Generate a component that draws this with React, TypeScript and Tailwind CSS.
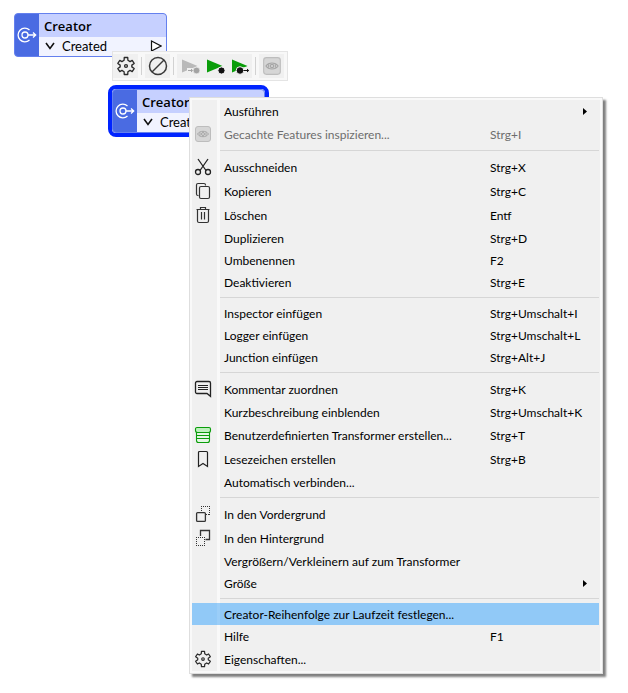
import type { ReactNode } from "react";
import clsx from "clsx";

type IconProps = { className?: string };

function GearIcon({ className = "size-[18px]" }: IconProps) {
  return (
    <svg viewBox="0 0 24 24" className={className} fill="none" stroke="#2a2a2a" strokeWidth="1.6" strokeLinejoin="round">
      <path d="M9.92 1.8H14.08L14.3 5.1 16.91 6.73 19.43 5.31 21.8 8.91 19.01 10.9V13.1L21.8 15.09 19.43 18.69 16.91 17.27 14.3 18.9 14.08 22.2H9.92L9.7 18.9 7.09 17.27 4.57 18.69 2.2 15.09 4.99 13.1V10.9L2.2 8.91 4.57 5.31 7.09 6.73 9.7 5.1Z" />
      <circle cx="12" cy="12" r="1.7" />
    </svg>
  );
}

function DisableIcon() {
  return (
    <svg viewBox="0 0 20 20" className="size-5" fill="none" stroke="#3a3a3a" strokeWidth="1.5">
      <circle cx="10" cy="10" r="8.5" />
      <path d="M16 4L4 16" />
    </svg>
  );
}

function RunIcon({ variant }: { variant: "from" | "to" | "through" }) {
  const fill = variant === "from" ? "#b9b9b9" : "#0a9d0a";
  const dark = variant === "from" ? "#a3a3a3" : "#111";
  return (
    <svg viewBox="0 0 20 18" className="h-[18px] w-5">
      <path d="M2 2.5L17.5 9 2 15.5Z" fill={fill} />
      {variant === "to" && <circle cx="16.5" cy="13.5" r="3.6" fill={dark} stroke="#f0f0f0" />}
      {variant === "from" && (
        <>
          <path d="M7 11H13V17H7Z" fill="#f0f0f0" />
          <path d="M8 13.5H12.5M11 12L12.7 13.5 11 15" fill="none" stroke={dark} />
          <circle cx="16.5" cy="13.5" r="3.3" fill={dark} stroke="#f0f0f0" strokeWidth="0.6" />
        </>
      )}
      {variant === "through" && (
        <>
          <path d="M7 13L10 10 20 11V17H7Z" fill="#f0f0f0" />
          <circle cx="10" cy="13.5" r="3.8" fill={dark} stroke="#f0f0f0" />
          <path d="M13.5 13.5H18.5M17 12L18.7 13.5 17 15" fill="none" stroke={dark} />
        </>
      )}
    </svg>
  );
}

function InspectIcon({ className = "size-[18px]" }: IconProps) {
  return (
    <svg viewBox="0 0 18 18" className={className} fill="none" stroke="#a6a6a6">
      <rect x="1.5" y="1.5" width="15" height="15" rx="2.5" fill="#d6d6d6" stroke="#bdbdbd" />
      <path d="M3.5 9C5 6.9 7 6.3 9 6.3S13 6.9 14.5 9C13 11.1 11 11.7 9 11.7S5 11.1 3.5 9Z" />
      <circle cx="9" cy="9" r="1.5" />
      <path d="M6 7.5V10.5M12 7.5V10.5" />
    </svg>
  );
}

function CutIcon() {
  return (
    <svg viewBox="0 0 18 18" className="size-[18px]" fill="none" stroke="#222" strokeWidth="1.3">
      <path d="M4 1L12 12.5M14 1L6 12.5" />
      <circle cx="4" cy="14" r="2.5" />
      <circle cx="14" cy="14" r="2.5" />
    </svg>
  );
}

function CopyIcon() {
  return (
    <svg viewBox="0 0 18 18" className="size-[18px]" fill="none" stroke="#333" strokeWidth="1.2">
      <path d="M4.5 13.5H4A1.5 1.5 0 0 1 2.5 12V3A1.5 1.5 0 0 1 4 1.5H10A1.5 1.5 0 0 1 11.5 3V3.5" />
      <rect x="5.5" y="4.5" width="10" height="12" rx="1.5" />
    </svg>
  );
}

function TrashIcon() {
  return (
    <svg viewBox="0 0 18 18" className="size-[18px]" fill="none" stroke="#333" strokeWidth="1.2">
      <path d="M2.5 3.5H15.5M6.5 3.5V1.5H11.5V3.5M3.5 3.5V15A1.5 1.5 0 0 0 5 16.5H13A1.5 1.5 0 0 0 14.5 15V3.5M7.5 6V13.5M10.5 6V13.5" />
    </svg>
  );
}

function CommentIcon() {
  return (
    <svg viewBox="0 0 18 18" className="size-[18px]" fill="none" stroke="#222" strokeWidth="1.3">
      <path d="M3 1.5H15A1.5 1.5 0 0 1 16.5 3V16.3L13 13.5H3A1.5 1.5 0 0 1 1.5 12V3A1.5 1.5 0 0 1 3 1.5Z" />
      <path d="M4 5.5H14M4 7.5H14M4 9.5H14" strokeWidth="1" />
    </svg>
  );
}

function CustomTransformerIcon() {
  return (
    <svg viewBox="0 0 18 18" className="size-[18px]" fill="none" stroke="#0a9d0a" strokeWidth="1.1">
      <path d="M2.5 6.5V14.5A2 2 0 0 0 4.5 16.5H13.5A2 2 0 0 0 15.5 14.5V6.5" fill="#e4f7e4" />
      <path d="M3 1.5H15A1.5 1.5 0 0 1 16.5 3V4.5A2 2 0 0 1 14.5 6.5H3.5A2 2 0 0 1 1.5 4.5V3A1.5 1.5 0 0 1 3 1.5Z" fill="#bdf0bd" />
      <path d="M2.5 9.5H15.5M2.5 12.500H15.5" />
    </svg>
  );
}

function BookmarkIcon() {
  return (
    <svg viewBox="0 0 18 18" className="size-[18px]" fill="none" stroke="#222" strokeWidth="1.2">
      <path d="M4.5 16.5V2.5A1 1 0 0 1 5.5 1.5H12.5A1 1 0 0 1 13.5 2.5V16.5L9 13.5Z" />
    </svg>
  );
}

function FrontIcon() {
  return (
    <svg viewBox="0 0 18 18" className="size-[18px]" fill="none" stroke="#333">
      <path d="M7 1.5H16M15.5 1V10M7.5 1V6M15 9.5H12" strokeDasharray="1 1" />
      <rect x="2.6" y="7.6" width="8.8" height="8.8" rx="1" strokeWidth="1.3" />
    </svg>
  );
}

function BackIcon() {
  return (
    <svg viewBox="0 0 18 18" className="size-[18px]" fill="none" stroke="#333">
      <path d="M6.5 7V1.5H15.5V10.5H11.5" strokeWidth="1.3" />
      <path d="M2 8.5H11M2.5 8V17M10.5 8V17M2 16.5H11" strokeDasharray="1 1" />
    </svg>
  );
}

function TransformerIcon() {
  return (
    <svg viewBox="0 0 20 18" className="h-[18px] w-5" fill="none" stroke="#fff" strokeWidth="1.3">
      <path d="M12.5 4A6.8 6.8 0 1 0 12.5 14" />
      <circle cx="8" cy="9" r="3" />
      <path d="M11 9H18.5M16 6.5L18.7 9 16 11.5" />
    </svg>
  );
}

type NodeProps = { title: string; port: string; selected?: boolean };

function TransformerNode({ title, port, selected }: NodeProps) {
  return (
    <div className={clsx("rounded", selected && "rounded-lg border-4 border-[#0024ff]")}>
      <div className="flex h-11 w-[153px] overflow-hidden rounded border border-[#6480ee] bg-[#4a6be2]">
        <div className="flex w-6 items-center justify-center">
          <TransformerIcon />
        </div>
        <div className="flex flex-1 flex-col">
          <div className="flex h-6 items-center bg-[#c6d0ff] pt-0.5 pl-[5px] font-['Open_Sans',sans-serif] text-[13px] font-semibold">
            {title}
          </div>
          <div className="flex flex-1 items-center bg-[#f1f3ff] pr-1 pl-[5px] text-[13px]">
            <svg viewBox="0 0 12 12" className="size-3" fill="none" stroke="#111" strokeWidth="1.6">
              <path d="M2 3L6 8.5 10 3" />
            </svg>
            <span className="flex-1 pl-1.5">{port}</span>
            <svg viewBox="0 0 12 12" className="size-3" fill="#fff" stroke="#111" strokeWidth="1.2">
              <path d="M1.5 1L11 6 1.5 11Z" />
            </svg>
          </div>
        </div>
      </div>
    </div>
  );
}

function ToolButton({ label, disabled, children }: { label: string; disabled?: boolean; children: ReactNode }) {
  return (
    <button
      type="button"
      aria-label={label}
      disabled={disabled}
      className="flex h-6 w-[25px] items-center justify-center bg-[#f0f0f0]"
    >
      {children}
    </button>
  );
}

function ToolSeparator() {
  return <div className="mx-[3px] h-[18px] w-px bg-[#d2d2d2]" />;
}

type Entry = {
  label: string;
  shortcut?: string;
  icon?: ReactNode;
  submenu?: boolean;
  disabled?: boolean;
  active?: boolean;
};

const groups: Entry[][] = [
  [
    { label: "Ausführen", submenu: true },
    { label: "Gecachte Features inspizieren...", shortcut: "Strg+I", icon: <InspectIcon />, disabled: true },
  ],
  [
    { label: "Ausschneiden", shortcut: "Strg+X", icon: <CutIcon /> },
    { label: "Kopieren", shortcut: "Strg+C", icon: <CopyIcon /> },
    { label: "Löschen", shortcut: "Entf", icon: <TrashIcon /> },
    { label: "Duplizieren", shortcut: "Strg+D" },
    { label: "Umbenennen", shortcut: "F2" },
    { label: "Deaktivieren", shortcut: "Strg+E" },
  ],
  [
    { label: "Inspector einfügen", shortcut: "Strg+Umschalt+I" },
    { label: "Logger einfügen", shortcut: "Strg+Umschalt+L" },
    { label: "Junction einfügen", shortcut: "Strg+Alt+J" },
  ],
  [
    { label: "Kommentar zuordnen", shortcut: "Strg+K", icon: <CommentIcon /> },
    { label: "Kurzbeschreibung einblenden", shortcut: "Strg+Umschalt+K" },
    { label: "Benutzerdefinierten Transformer erstellen...", shortcut: "Strg+T", icon: <CustomTransformerIcon /> },
    { label: "Lesezeichen erstellen", shortcut: "Strg+B", icon: <BookmarkIcon /> },
    { label: "Automatisch verbinden..." },
  ],
  [
    { label: "In den Vordergrund", icon: <FrontIcon /> },
    { label: "In den Hintergrund", icon: <BackIcon /> },
    { label: "Vergrößern/Verkleinern auf zum Transformer" },
    { label: "Größe", submenu: true },
  ],
  [
    { label: "Creator-Reihenfolge zur Laufzeit festlegen...", active: true },
    { label: "Hilfe", shortcut: "F1" },
    { label: "Eigenschaften...", icon: <GearIcon /> },
  ],
];

function MenuEntry({ label, shortcut, icon, submenu, disabled, active }: Entry) {
  return (
    <button
      type="button"
      role="menuitem"
      disabled={disabled}
      className={clsx(
        "flex w-full items-center text-left",
        icon ? "h-6" : "h-[22px]",
        active && "bg-[#91c9f7]",
        disabled ? "text-[#6d6d6d]" : "text-black"
      )}
    >
      <span className="flex w-[25px] justify-center pr-1">{icon}</span>
      <span className={clsx("mr-1 w-[3px] self-stretch", active ? "bg-[#9bcef8]" : "bg-[#f9f9f9]")} />
      <span className="flex-1 pt-0.5 whitespace-nowrap">{label}</span>
      <span className="w-[93px] pt-0.5 whitespace-nowrap">{shortcut}</span>
      <span className="w-4">
        {submenu && (
          <svg viewBox="0 0 4 7" className="h-[7px] w-1" fill="#000">
            <path d="M0 0L4 3.5 0 7Z" />
          </svg>
        )}
      </span>
    </button>
  );
}

function ContextMenu() {
  return (
    <div
      role="menu"
      className="w-[414px] border border-[#dedede] bg-[#f9f9f9] p-0.5 text-xs shadow-[3px_3px_2px_rgba(0,0,0,0.5)]"
    >
      <div className="bg-[#f0f0f0] pr-px">
        {groups.map((group, i) => (
          <div key={i}>
            {i > 0 && (
              <div role="separator" className="flex h-[9px] items-center pl-[25px]">
                <span className="w-[3px] self-stretch bg-[#f9f9f9]" />
                <span className="h-px flex-1 bg-[#d6d6d6]" />
              </div>
            )}
            {group.map((entry) => (
              <MenuEntry key={entry.label} {...entry} />
            ))}
          </div>
        ))}
      </div>
    </div>
  );
}

export default function App() {
  return (
    <main className="relative min-h-screen overflow-hidden bg-white font-[Lato,sans-serif] text-black">
      {/* Workspace canvas */}
      <div className="absolute top-[13px] left-[14px]">
        <TransformerNode title="Creator" port="Created" />
      </div>
      <div className="absolute top-[85px] left-[108px]">
        <TransformerNode title="Creator_2" port="Created" selected />
      </div>

      {/* Quick actions above the selected transformer */}
      <div role="toolbar" className="absolute top-[51px] left-[112px] flex items-center border border-[#e4e4e4] bg-[#f8f8f8] py-0.5 pr-[3px]">
        <ToolButton label="Eigenschaften">
          <GearIcon className="size-5" />
        </ToolButton>
        <ToolSeparator />
        <ToolButton label="Deaktivieren">
          <DisableIcon />
        </ToolButton>
        <ToolSeparator />
        <ToolButton label="Ab hier ausführen" disabled>
          <RunIcon variant="from" />
        </ToolButton>
        <ToolButton label="Bis hier ausführen">
          <RunIcon variant="to" />
        </ToolButton>
        <ToolButton label="Ab diesem ausführen">
          <RunIcon variant="through" />
        </ToolButton>
        <ToolSeparator />
        <ToolButton label="Inspizieren" disabled>
          <InspectIcon className="size-5" />
        </ToolButton>
      </div>

      <div className="absolute top-[97px] left-[189px]">
        <ContextMenu />
      </div>
    </main>
  );
}
